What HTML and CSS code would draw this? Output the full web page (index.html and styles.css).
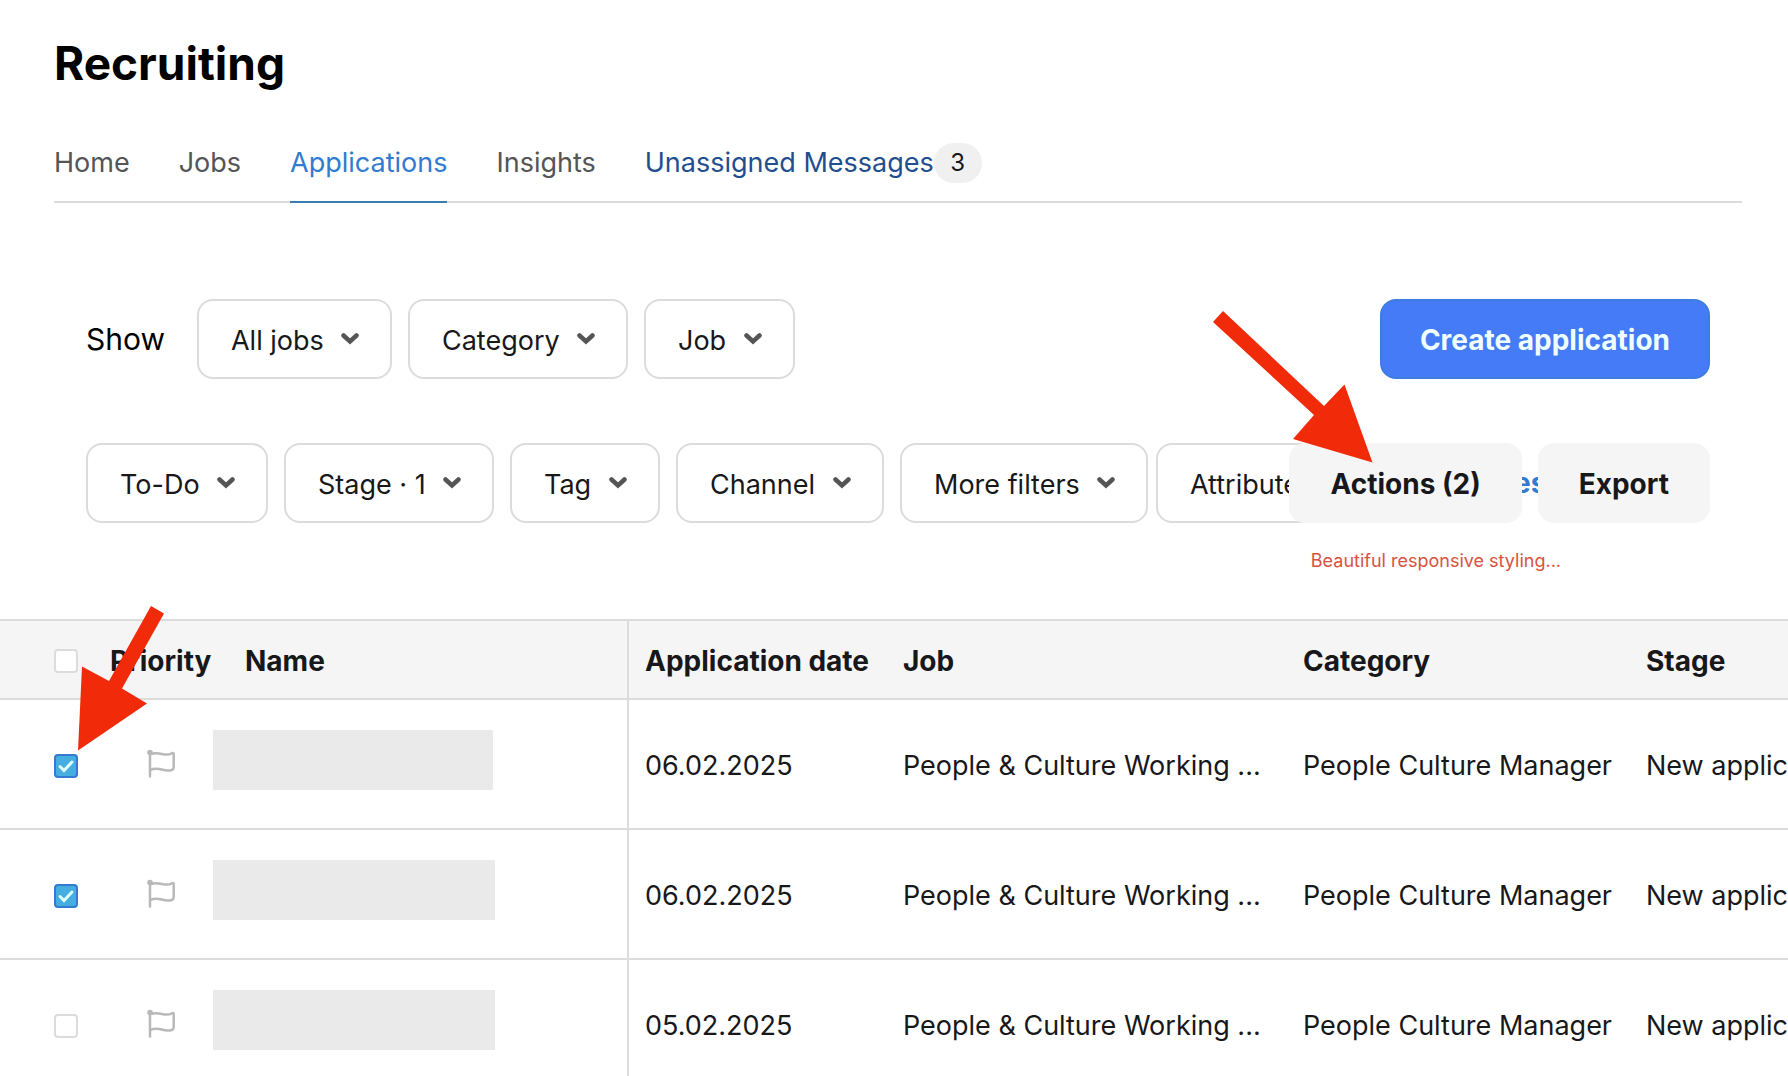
FILE: index.html
```html
<!DOCTYPE html>
<html lang="en">
<head>
<meta charset="UTF-8">
<meta name="viewport" content="width=device-width, initial-scale=1.0">
<title>Recruiting</title>

<link rel="stylesheet" href="styles.css">
</head>
<body>

<svg class="sprite" aria-hidden="true">
    <symbol id="chevron" viewBox="0 0 18 12">
        <path d="M2.5 2.5 L9 8.5 L15.5 2.5" fill="none" stroke="#555" stroke-width="4.5" stroke-linecap="round"/>
    </symbol>
    <symbol id="flag" viewBox="0 0 28 30">
        <path d="M3 4v23.500M3 5.500c4-2 8-1.500 12-.5c4 1 7 1 10-.800c1-.500 1.700 0 1.700 1v13c0 1.500-.800 2.300-2 2.800c-3.500 1.300-6 .700-10-.500c-4-1.100-8-1-11.700.500" fill="none" stroke="#b9b9b9" stroke-width="2.5" stroke-linecap="round" stroke-linejoin="round"/>
        <circle cx="3" cy="3.500" r="2.800" fill="#b9b9b9"/>
    </symbol>
</svg>

<header class="page-header">
    <h1>Recruiting</h1>

    <nav class="tabs">
        <a href="#" class="tab">Home</a>
        <a href="#" class="tab">Jobs</a>
        <a href="#" class="tab active">Applications</a>
        <a href="#" class="tab">Insights</a>
        <a href="#" class="tab messages">Unassigned Messages<span class="count">3</span></a>
    </nav>
</header>

<main>
    <section class="toolbar">
        <div class="toolbar-row">
            <div class="filters">
                <span class="show-label">Show</span>
                <div class="filter">
                    <select aria-label="Jobs shown"><option>All jobs</option></select>
                    <svg><use href="#chevron"/></svg>
                </div>
                <div class="filter">
                    <select aria-label="Category"><option>Category</option></select>
                    <svg><use href="#chevron"/></svg>
                </div>
                <div class="filter">
                    <select aria-label="Job"><option>Job</option></select>
                    <svg><use href="#chevron"/></svg>
                </div>
            </div>
            <div class="actions">
                <button type="button" class="btn primary">Create application</button>
            </div>
        </div>

        <div class="toolbar-row">
            <div class="filters">
                <div class="filter">
                    <select aria-label="To-Do"><option>To-Do</option></select>
                    <svg><use href="#chevron"/></svg>
                </div>
                <div class="filter">
                    <select aria-label="Stage"><option>Stage · 1</option></select>
                    <svg><use href="#chevron"/></svg>
                </div>
                <div class="filter">
                    <select aria-label="Tag"><option>Tag</option></select>
                    <svg><use href="#chevron"/></svg>
                </div>
                <div class="filter">
                    <select aria-label="Channel"><option>Channel</option></select>
                    <svg><use href="#chevron"/></svg>
                </div>
                <div class="filter-group">
                    <div class="filter">
                        <select aria-label="More filters"><option>More filters</option></select>
                        <svg><use href="#chevron"/></svg>
                    </div>
                    <div class="filter">
                        <select aria-label="Attributes"><option>Attributes · 1</option></select>
                        <svg><use href="#chevron"/></svg>
                    </div>
                </div>
                <a href="#" class="reset">Reset</a>
            </div>
            <div class="actions">
                <button type="button" class="btn">Actions (2)</button>
                <button type="button" class="btn">Export</button>
            </div>
            <p class="note">Beautiful responsive styling...</p>
            <svg class="arrow arrow-actions" viewBox="0 0 160 152" aria-hidden="true">
                <path d="M10 0L0 11L101 104L80 128L159.500 151.500L131.500 73.500L111 95Z"/>
            </svg>
        </div>
    </section>

    <div class="table-wrap">
        <table>
            <colgroup>
                <col class="col-check">
                <col class="col-priority">
                <col class="col-name">
                <col class="col-date">
                <col class="col-job">
                <col class="col-category">
                <col>
            </colgroup>
            <thead>
                <tr>
                    <th class="check"><input type="checkbox" aria-label="Select all"></th>
                    <th>Priority</th>
                    <th class="name">Name</th>
                    <th>Application date</th>
                    <th>Job</th>
                    <th>Category</th>
                    <th>Stage</th>
                </tr>
            </thead>
            <tbody>
                <tr>
                    <td class="check"><input type="checkbox" aria-label="Select applicant 1" checked></td>
                    <td class="priority"><svg><use href="#flag"/></svg></td>
                    <td class="name"><div class="hidden-name short"></div></td>
                    <td>06.02.2025</td>
                    <td>People &amp; Culture Working ...</td>
                    <td>People Culture Manager</td>
                    <td>New applications</td>
                </tr>
                <tr>
                    <td class="check"><input type="checkbox" aria-label="Select applicant 2" checked></td>
                    <td class="priority"><svg><use href="#flag"/></svg></td>
                    <td class="name"><div class="hidden-name"></div></td>
                    <td>06.02.2025</td>
                    <td>People &amp; Culture Working ...</td>
                    <td>People Culture Manager</td>
                    <td>New applications</td>
                </tr>
                <tr>
                    <td class="check"><input type="checkbox" aria-label="Select applicant 3"></td>
                    <td class="priority"><svg><use href="#flag"/></svg></td>
                    <td class="name"><div class="hidden-name"></div></td>
                    <td>05.02.2025</td>
                    <td>People &amp; Culture Working ...</td>
                    <td>People Culture Manager</td>
                    <td>New applications</td>
                </tr>
            </tbody>
        </table>
        <svg class="arrow arrow-select" viewBox="0 0 86 145" aria-hidden="true">
            <path d="M73 0L86 7.500L44 82.500L69 97.500L0 144.500L4 60.500L31 75Z"/>
        </svg>
    </div>
</main>

</body>
</html>
```

FILE: styles.css
```css
*{
    margin:0;
    padding:0;
    box-sizing:border-box;
    font-family:Inter,"Liberation Sans",sans-serif;
}

body{
    background:#fff;
    color:#18181a;
    font-size:27px;
    line-height:40px;
    overflow-x:hidden;
}

.sprite{
    display:none;
}

.page-header{
    padding:35px 46px 0 54px;
}

h1{
    color:#000;
    font-size:46px;
    line-height:56px;
    font-weight:700;
    margin-bottom:52px;
}

/* tabs */
.tabs{
    display:flex;
    gap:49px;
    border-bottom:2px solid #dcdcdc;
}

.tab{
    color:#555;
    text-decoration:none;
    white-space:nowrap;
    padding-bottom:18px;
    margin-bottom:-2px;
    border-bottom:2px solid transparent;
}

.tab.active{
    color:#317bd0;
    border-color:#3a7cae;
}

.tab.messages{
    display:flex;
    color:#1f4f8f;
}

.count{
    min-width:48px;
    height:40px;
    border-radius:20px;
    background:#f0f0f0;
    color:#18181a;
    font-size:24px;
    text-align:center;
}

/* toolbar */
.toolbar{
    display:flex;
    flex-direction:column;
    gap:64px;
    padding:96px 78px 96px 86px;
}

.toolbar-row{
    position:relative;
    display:flex;
    gap:16px;
}

.filters{
    flex:1;
    min-width:0;
    display:flex;
    align-items:center;
    gap:16px;
}

.filter-group{
    display:flex;
    gap:8px;
}

.show-label{
    color:#000;
    font-size:30px;
    margin-right:16px;
}

.filter{
    display:grid;
    flex:none;
    align-items:center;
}

.filter select{
    grid-area:1/1;
    appearance:none;
    height:80px;
    padding:2px 66px 0 32px;
    border:2px solid #dcdcdc;
    border-radius:16px;
    background:#fff;
    color:#18181a;
    font-size:27px;
}

.filter svg{
    grid-area:1/1;
    justify-self:end;
    width:18px;
    height:12px;
    margin-right:33px;
    pointer-events:none;
}

.reset{
    color:#317bd0;
    font-size:28px;
    font-weight:700;
    text-decoration:none;
    margin-left:64px;
}

.actions{
    display:flex;
    gap:16px;
    z-index:1;
}

.btn{
    height:80px;
    padding:2px 41px 0;
    border:none;
    border-radius:16px;
    background:#f5f5f5;
    color:#18181a;
    font-size:28px;
    font-weight:700;
    white-space:nowrap;
}

.btn.primary{
    padding:2px 38px 0;
    border:2px solid #3f7ce0;
    background:#457bf6;
    color:#effeff;
}

/* annotations */
.note{
    position:absolute;
    top:108px;
    right:149px;
    color:#d9523f;
    font-size:18px;
    line-height:20px;
}

.arrow{
    position:absolute;
    z-index:2;
    fill:#f12a0a;
    pointer-events:none;
}

.arrow-actions{
    width:160px;
    height:152px;
    right:337px;
    top:-132px;
}

.arrow-select{
    width:86px;
    height:145px;
    left:78px;
    top:-13px;
}

/* applications table */
.table-wrap{
    position:relative;
}

table{
    width:100%;
    table-layout:fixed;
    border-collapse:separate;
    border-spacing:0;
}

.col-check{
    width:94px;
}

.col-priority{
    width:119px;
}

.col-name{
    width:416px;
}

.col-date{
    width:258px;
}

.col-job{
    width:400px;
}

.col-category{
    width:343px;
}

th,td{
    padding:4px 16px 0;
    border-bottom:2px solid #dcdcdc;
    text-align:left;
    white-space:nowrap;
}

th{
    height:81px;
    padding-top:2px;
    border-top:2px solid #dcdcdc;
    background:#f5f5f5;
    font-size:28px;
    font-weight:700;
}

td{
    height:130px;
}

.check{
    padding-left:54px;
    padding-right:0;
}

th.name{
    padding-left:32px;
}

td.name{
    padding:0;
}

th.name,td.name{
    border-right:2px solid #dcdcdc;
}

.check input{
    appearance:none;
    display:block;
    width:24px;
    height:24px;
    border:2px solid #dcdcdc;
    border-radius:4px;
    background:#fff;
}

.check input:checked{
    border-color:#337ad0;
    background:#45ade0 url("data:image/svg+xml,%3Csvg xmlns='http://www.w3.org/2000/svg' viewBox='0 0 20 20'%3E%3Cpath d='M4 10.5l4 4L16 6' fill='none' stroke='%23dff' stroke-width='3' stroke-linecap='round'/%3E%3C/svg%3E") center/20px 20px no-repeat;
}

.priority svg{
    display:block;
    width:28px;
    height:30px;
    margin-left:37px;
}

td.priority{
    padding-top:0;
}

.hidden-name{
    width:282px;
    height:60px;
    margin-bottom:9px;
    background:#eaeaea;
}

.hidden-name.short{
    width:280px;
}
```
